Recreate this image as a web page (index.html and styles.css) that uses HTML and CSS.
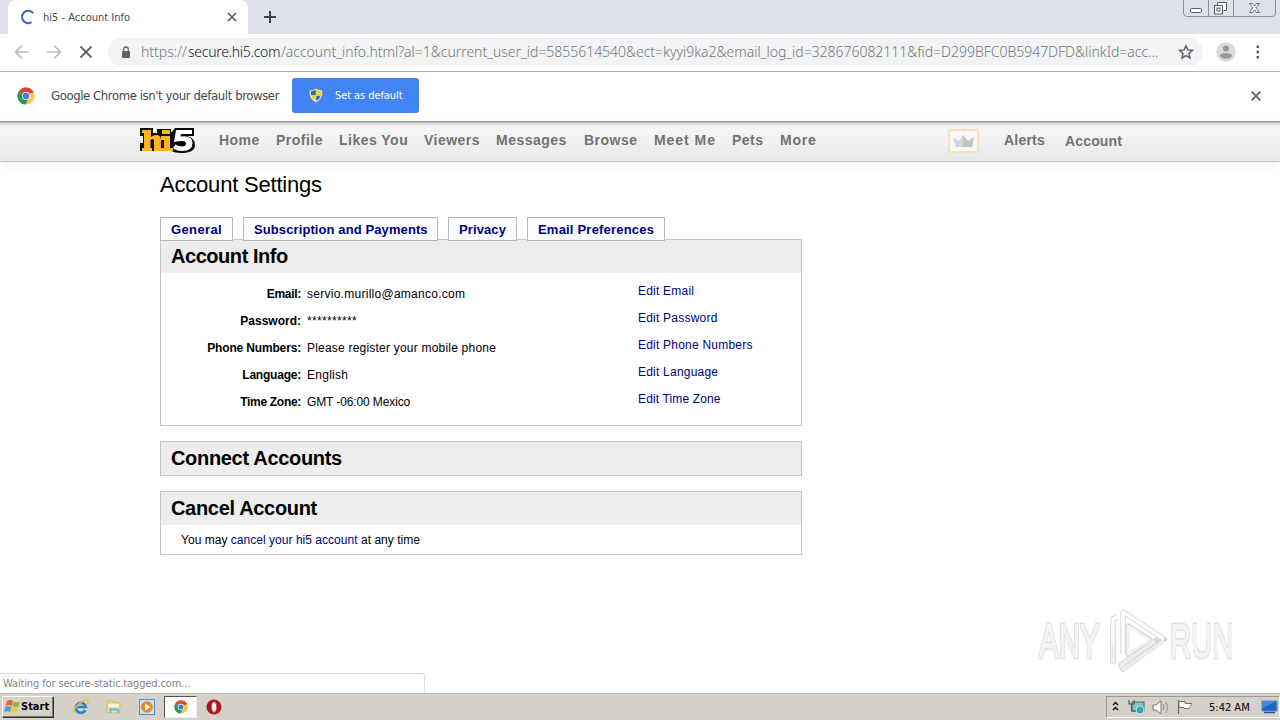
FILE: index.html
```
<!DOCTYPE html>
<html lang="en">
<head>
<meta charset="utf-8">
<title>hi5 - Account Info</title>
<link rel="stylesheet" href="styles.css">
</head>
<body>
<svg width="0" height="0" class="defs">
  <defs>
    <symbol id="chrome" viewBox="0 0 18 18">
      <circle cx="9" cy="9" r="8.500" fill="#fbc93d"/>
      <path d="M9 9 L1.600 4.800 A8.500 8.500 0 0 1 16.400 4.800 Z" fill="#df4537"/>
      <path d="M9 9 L1.600 4.800 A8.500 8.500 0 0 0 8.300 17.500 L11.500 12 Z" fill="#259b57"/>
      <path d="M9 5h7.500" stroke="#df4537" stroke-width="1"/>
      <circle cx="9" cy="9" r="4.100" fill="#fff"/>
      <circle cx="9" cy="9" r="3.300" fill="#3e7de8"/>
    </symbol>
  </defs>
</svg>
<div class="screen">
  <header class="tabstrip">
    <div class="tab">
      <svg class="spinner" width="16" height="16" viewBox="0 0 16 16"><path d="M13.200 4.200A6.200 6.200 0 1 0 11.500 13.200" fill="none" stroke="#3467d6" stroke-width="2"/></svg>
      <span class="tab-title">hi5 - Account Info</span>
      <svg class="tab-close" width="10" height="10" viewBox="0 0 10 10"><path d="M1 1l8 8M9 1l-8 8" stroke="#55585c" stroke-width="1.600"/></svg>
    </div>
    <svg class="new-tab" width="12" height="12" viewBox="0 0 12 12"><path d="M6 0v12M0 6h12" stroke="#3c4043" stroke-width="2"/></svg>
    <svg class="winbtns" width="94" height="18" viewBox="0 0 94 18">
      <path d="M.5 0v13q0 3.500 3.500 3.500h85q3.500 0 3.500-3.500V0M25.500 0v16M50.500 0v16" fill="none" stroke="#8b8f98"/>
      <rect x="7.500" y="8.500" width="11" height="4" rx="1" fill="#fff" stroke="#555a64"/>
      <path d="M34.500 5.500v-3h9v8h-3" fill="#fff" stroke="#555a64"/><rect x="31.500" y="5.500" width="8" height="8.500" fill="#fff" stroke="#555a64"/><rect x="34" y="8" width="3" height="3" fill="none" stroke="#555a64"/>
      <path d="M66.500 3.500h3l2 2.500 2-2.500h3l-3.300 4.300 3.300 4.700h-3l-2-2.700-2 2.700h-3l3.300-4.700z" fill="#fff" stroke="#6a6e77"/>
    </svg>
  </header>
  <div class="toolbar">
    <svg width="100" height="33" viewBox="0 0 100 33" fill="none">
      <path d="M29 18H16M22 11.500L15.500 18l6.500 6.500M47 18h13M54 11.500l6.500 6.500-6.500 6.500" stroke="#b8babd" stroke-width="1.600"/>
      <path d="M80.500 12.500l11 11M91.500 12.500l-11 11" stroke="#5f6368" stroke-width="1.800"/>
    </svg>
    <div class="omnibox">
      <svg class="lock" width="10" height="13" viewBox="0 0 10 13"><rect x="1" y="5" width="8" height="7" rx="1" fill="#5f6368"/><path d="M2.700 5.500V3.300a2.300 2.300 0 0 1 4.600 0v2.200" fill="none" stroke="#5f6368" stroke-width="1.300"/></svg>
      <span class="url"><span class="u1">https://</span><span class="u2">secure.hi5.com</span><span class="u3">/account_info.html?al=1&amp;current_user_id=5855614540&amp;ect=kyyi9ka2&amp;email_log_id=328676082111&amp;fid=D299BFC0B5947DFD&amp;linkId=acc...</span></span>
      <svg class="star" width="16" height="16" viewBox="0 0 16 16"><path d="M8 1.700l1.900 4.200 4.500.5-3.400 3.100 1 4.500L8 11.700 4 14l1-4.500L1.600 6.400l4.500-.5z" fill="none" stroke="#5f6368" stroke-width="1.500"/></svg>
    </div>
    <svg class="avatar" width="20" height="20" viewBox="0 0 20 20"><circle cx="10" cy="10" r="9.800" fill="#dadbde"/><circle cx="10" cy="6.500" r="3" fill="#96989b"/><ellipse cx="10" cy="13.800" rx="6" ry="2.900" fill="#96989b"/></svg>
    <svg class="dots" width="4" height="14" viewBox="0 0 4 14"><path d="M.5.500h2.600v2.600H.5zM.5 5.700h2.600v2.600H.5zM.5 10.900h2.600v2.600H.5z" fill="#5f6368"/></svg>
  </div>
  <div class="infobar">
    <svg class="chrome-logo" width="18" height="18"><use href="#chrome"/></svg>
    <span class="info-text">Google Chrome isn't your default browser</span>
    <div class="default-btn">
      <svg width="14" height="15" viewBox="0 0 14 15"><path d="M7 .5Q10 2.300 13.300 2.200V7Q12.500 12 7 14.500 1.500 12 .7 7V2.200Q4 2.300 7 .5z" fill="#e8edf2" stroke="#7c8a80" stroke-width=".6"/><path d="M6.800 2L2 3.200V7.300h4.800z" fill="#2f6fae"/><path d="M7.200 2L12 3.200V7.300H7.200zM6.800 7.700H2.200Q3 11 6.800 13z" fill="#f3d01c"/><path d="M7.200 7.700h4.600Q11 11 7.200 13z" fill="#2f6fae"/></svg>
      <span class="btn-label">Set as default</span>
    </div>
    <svg class="info-close" width="10" height="10" viewBox="0 0 10 10"><path d="M.7.700l8.600 8.600M9.300.700L.7 9.300" stroke="#5f6368" stroke-width="1.900"/></svg>
  </div>
  <main class="page">
    <nav class="site-nav">
      <svg class="logo" width="56" height="28" viewBox="0 0 56 28">
        <path d="M0 2h13v5h4V3h14v3h1l3-4h19v8h-7q8 2 8 9 0 8-14 8-6 0-10-2H0v-8h3V10H0z" fill="#0b0906"/>
        <path d="M2 4h9v7q2-2 5-2 5 0 5 5v8h2v3h-9V15q0-2-2-2-1.500 0-1.500 2v7H12v3H2v-3h2V7H2zM22 4h8v4h-8zM21 10h9v12h3v3H22v-3h2v-8h-3z" fill="#fbb51c"/>
        <path d="M36 4h16v4H41l-.5 2.500q12-1.500 12 6.500 0 8-10.500 8-6 0-9-3l2.500-3.500q3 2 6.500 2 4 0 4-3 0-4-12-1.500z" fill="#fff"/>
      </svg>
      <span class="n n1">Home</span><span class="n n2">Profile</span><span class="n n3">Likes You</span><span class="n n4">Viewers</span><span class="n n5">Messages</span><span class="n n6">Browse</span><span class="n n7">Meet Me</span><span class="n n8">Pets</span><span class="n n9">More</span>
      <span class="crown"><svg width="22" height="14" viewBox="0 0 22 14"><path d="M0 4l6 3 4-6 5 6 6-4-2 10H3z" fill="#d5d6d9"/><path d="M10 1l5 6 6-4-2 10H10z" fill="#c3c4c8"/></svg></span>
      <span class="n n10">Alerts</span><span class="n n11">Account</span>
    </nav>
    <div class="content">
      <h1>Account Settings</h1>
      <div class="tabs">
        <a class="t1">General</a><a class="t2">Subscription and Payments</a><a class="t3">Privacy</a><a class="t4">Email Preferences</a>
      </div>
      <section class="box info">
        <h2 class="h-a">Account Info</h2>
        <div class="rows">
          <div class="row"><b class="l1">Email:</b><span class="v1">servio.murillo@amanco.com</span><a>Edit Email</a></div>
          <div class="row"><b class="l2">Password:</b><span class="v2">**********</span><a>Edit Password</a></div>
          <div class="row"><b class="l3">Phone Numbers:</b><span class="v3">Please register your mobile phone</span><a>Edit Phone Numbers</a></div>
          <div class="row"><b class="l4">Language:</b><span class="v4">English</span><a>Edit Language</a></div>
          <div class="row"><b class="l5">Time Zone:</b><span class="v5">GMT -06:00 Mexico</span><a class="e5">Edit Time Zone</a></div>
        </div>
      </section>
      <section class="box"><h2>Connect Accounts</h2></section>
      <section class="box"><h2>Cancel Account</h2><p>You may <a>cancel your hi5 account</a> at any time</p></section>
    </div>
    <div class="status">Waiting for secure-static.tagged.com...</div>
    <div class="watermark">
      <span class="wm wm1">ANY</span>
      <svg width="62" height="66" viewBox="0 0 62 66" fill="none" stroke-linejoin="round">
        <g stroke="#d6d6d6" stroke-width="5.500"><path d="M11 9l-4 2v45"/><path d="M17 46V4L58 31 17 61l-2-4 37-26"/><path d="M22 46V18l22 14z"/></g>
        <path d="M11 9l-4 2v45M17 46V4l41 27" stroke="#fff" stroke-width="3.500"/>
        <path d="M58 33L17 61l-2-4 34-24M7 36v20" stroke="#ededed" stroke-width="3.500"/>
        <path d="M22 46V18l22 14z" fill="#fff" stroke="#f2f2f2" stroke-width="3"/>
      </svg>
      <span class="wm wm2">RUN</span>
    </div>
  </main>
  <footer class="taskbar">
    <div class="start"><svg width="17" height="15" viewBox="0 0 17 15"><path d="M3 2q3-2 6 0L8 7Q5 5 1.500 7z" fill="#e9652e"/><path d="M10 2.500q3 1.500 6 0L14.500 7.500q-3 1.500-6 0z" fill="#8bbd45"/><path d="M1.300 8q3-1.500 6 0l-1 5q-3-1.500-6 0z" fill="#4c9bd7"/><path d="M8.300 8.500q3 1.500 6 0l-1 4.500q-3 1.500-6 0z" fill="#f7c52d"/></svg><b>Start</b></div>
    <div class="task ie"><svg width="16" height="16" viewBox="0 0 18 18"><path d="M14 12.500A5.700 5.700 0 1 1 14.500 9H4" fill="none" stroke="#2586d0" stroke-width="3"/><path d="M2 16Q-1 12 7 5.500T17 2.500q.5 1-1 3" fill="none" stroke="#e8bd35" stroke-width="1.500"/></svg></div>
    <div class="task"><svg width="16" height="16" viewBox="0 0 16 16"><path d="M1 3l5-2 1 2 7 1v10H1z" fill="#f3d774" stroke="#d0a73c" stroke-width=".6"/><path d="M2 5h11v3H2z" fill="#fff7cb"/><path d="M3 15V9h11v6h-3v-3H6v3z" fill="#6ab9e7" stroke="#eef8fd" stroke-width=".5"/></svg></div>
    <div class="task"><svg width="16" height="16" viewBox="0 0 16 16"><rect x=".5" y=".5" width="15" height="15" fill="#bfe2f7" stroke="#4798d2"/><circle cx="8" cy="8" r="5.800" fill="#ee871b"/><path d="M6 4.500L11.500 8 6 11.500z" fill="#fff"/></svg></div>
    <div class="task active"><svg width="14" height="14"><use href="#chrome"/></svg></div>
    <div class="task opera"><svg width="16" height="16" viewBox="0 0 16 16"><circle cx="8" cy="8" r="7.500" fill="#a91822"/><ellipse cx="8" cy="8" rx="2.500" ry="5.300" fill="#fff" stroke="#d95155"/></svg></div>
    <div class="tray">
      <svg width="92" height="20" viewBox="0 0 92 20" fill="none">
        <path d="M6 8l2.500-2.500L11 8M6 13l2.500-2.500L11 13" stroke="#111" stroke-width="1.500"/>
        <rect x="25" y="5" width="12" height="9" fill="#84bfc4" stroke="#456f75"/><path d="M22 3v4h5V3M24.500 7v7h6" stroke="#555" stroke-width="1.200"/><circle cx="33" cy="13" r="4" fill="#35a7ab" stroke="#e4ffff" stroke-width=".7"/>
        <path d="M46 8h3l5-4v13l-5-4h-3z" fill="#fff" stroke="#777"/><path d="M56 7q2 3 0 6M58.500 5q4 5.500 0 11" stroke="#888"/>
        <path d="M71.500 3v14" stroke="#666" stroke-width="1.200"/><path d="M72 4.500h6v2h7l-3 5h-5v-1h-5z" fill="#fff" stroke="#777"/>
      </svg>
      <span class="clock">5:42 AM</span>
      <svg width="17" height="14" viewBox="0 0 17 14"><rect x="1" y="1" width="15" height="10" fill="#2362c5" stroke="#5c8cce"/><path d="M1 1h14L2 8z" fill="#478be0"/><path d="M3 12.500h11" stroke="#28518e" stroke-width="1.500"/></svg>
    </div>
  </footer>
</div>
</body>
</html>
```
FILE: styles.css
```
* { box-sizing: border-box; }
body { margin: 0; overflow: hidden; background: #fff; font-family: "Liberation Sans", Arial, sans-serif; color: #000; }
.defs { position: absolute; }
svg { display: block; flex: none; }
.screen { width: 1280px; height: 720px; display: flex; flex-direction: column; overflow: hidden; white-space: nowrap; }
.tabstrip { height: 34px; flex: none; display: flex; background: #dee1e8; padding-left: 8px; }
.tab { width: 240px; height: 34px; background: #fff; border-radius: 8px 8px 0 0; display: flex; align-items: center; padding-left: 12px; }
.tab-title, .info-text, .btn-label, .status, .clock, .start { font-family: "DejaVu Sans Condensed", "DejaVu Sans", sans-serif; }
.tab-title { width: 191px; padding-left: 7px; font-size: 11px; color: #45494d; }
.new-tab { margin: 11px 0 0 16px; }
.winbtns { margin-left: auto; margin-right: 3px; }
.toolbar { height: 38px; flex: none; display: flex; align-items: flex-start; border-bottom: 1px solid #b0b0b3; }
.omnibox { width: 1095px; height: 28px; margin: 4px 0 0 8px; border-radius: 14px; background: #f1f3f5; display: flex; align-items: center; padding-left: 13px; }
.url { width: 1047px; padding-left: 10px; font-family: "Noto Sans", sans-serif; font-size: 14px; font-weight: 300; color: #74787c; display: flex; position: relative; top: -1px; }
.u1 { width: 47px; }
.u2 { width: 93px; color: #202124; letter-spacing: -.27px; }
.u3 { letter-spacing: -.03px; }
.avatar { margin: 8px 0 0 13px; }
.dots { margin: 11px 0 0 20px; }
.infobar { height: 49px; flex: none; display: flex; align-items: center; padding: 0 0 2px 17px; }
.info-text { width: 241px; margin-left: 16px; font-size: 13px; letter-spacing: -.41px; color: #44474a; }
.default-btn { width: 127px; height: 35px; border-radius: 3px; background: #4284f4; display: flex; align-items: center; padding-left: 17px; color: #fff; }
.btn-label { margin-left: 12px; font-size: 11px; letter-spacing: -.08px; }
.info-close { margin-left: auto; margin-right: 19px; }
.page { height: 572px; flex: none; position: relative; }
.site-nav { height: 41px; display: flex; padding-left: 140px; background: linear-gradient(#888 0, #aaa 1px, #d4d4d4 2px, #f0f0f0 5px, #f5f5f5 9px, #e9e9e9 100%); border-bottom: 1px solid #ccc; box-shadow: 0 3px 8px #eee; }
.logo { margin: 5px 23px 0 0; }
.n { padding-top: 11px; line-height: 17px; font-weight: bold; font-size: 14px; color: #727272; letter-spacing: .48px; }
.n1 { width: 57px; }
.n2 { width: 63px; }
.n3 { width: 85px; }
.n4 { width: 72px; }
.n5 { width: 88px; }
.n6 { width: 70px; }
.n7 { width: 78px; letter-spacing: .95px; }
.n8 { width: 48px; }
.n9 { width: 168px; letter-spacing: .8px; }
.n10 { width: 61px; letter-spacing: .2px; }
.n11 { padding-top: 12px; letter-spacing: .15px; }
.crown { width: 31px; height: 24px; margin: 8px 25px 0 0; border: 2px solid #f3e4bd; border-radius: 3px; background: #f7f7f6; display: grid; place-items: center; }
.content { width: 642px; margin-left: 160px; }
h1 { margin: 0; height: 55px; padding-top: 10px; font-size: 22px; line-height: 26px; font-weight: normal; letter-spacing: -.2px; }
.tabs { display: flex; gap: 10px; height: 24px; position: relative; z-index: 1; }
.tabs a { height: 24px; border: 1px solid #b2b8c2; background: #fbfdff; padding-left: 10px; line-height: 23px; font-size: 13px; font-weight: bold; color: #000080; letter-spacing: .1px; }
.tabs .t1 { width: 73px; letter-spacing: .38px; }
.t2 { width: 195px; }
.t3 { width: 69px; }
.tabs .t4 { width: 138px; letter-spacing: .2px; }
.box { border: 1px solid #c6c6c8; margin-bottom: 15px; background: #fff; }
.info { height: 187px; margin-top: -2px; }
h2 { margin: 0; height: 33px; background: #ededed; padding-left: 10px; font-size: 20px; line-height: 33px; letter-spacing: -.32px; }
.h-a { letter-spacing: -.45px; }
.rows { padding-top: 8px; font-size: 12px; }
.row { height: 27px; display: flex; line-height: 27px; }
.row b { width: 140px; text-align: right; margin-right: 6px; }
.l1, .l5 { letter-spacing: -.3px; }
.l3 { letter-spacing: -.16px; }
.l4 { letter-spacing: -.22px; }
.row span { width: 331px; }
.v1, .v4 { letter-spacing: .27px; }
.v2 { letter-spacing: .33px; }
.v3 { letter-spacing: .21px; }
.v5 { letter-spacing: -.12px; }
.row a { line-height: 21px; letter-spacing: .22px; }
.row .e5 { letter-spacing: .14px; }
a { color: #000080; }
.box p { margin: 0; height: 29px; padding: 1px 0 0 20px; font-size: 12px; line-height: 29px; letter-spacing: .03px; }
.status { position: absolute; left: 0; bottom: 0; width: 425px; height: 20px; border: 1px solid #ddd; border-left: 0; border-bottom: 0; border-top-right-radius: 3px; background: #fff; padding-left: 3px; line-height: 19px; font-size: 11px; letter-spacing: -.13px; color: #858585; }
.watermark { position: absolute; left: 1039px; top: 487px; width: 200px; height: 66px; display: flex; align-items: center; }
.wm { font-family: "Liberation Sans", sans-serif; font-size: 46px; line-height: 66px; width: 104px; transform: scaleX(.64); transform-origin: left; margin-right: -37px; color: #f3f3f3; -webkit-text-stroke: 2px #f3f3f3; filter: drop-shadow(0 0 1px #bcbcbc) drop-shadow(0 0 1px #ddd); }
.wm2 { margin-left: 2px; }
.taskbar { height: 27px; flex: none; background: #d5d0c8; border-top: 1px solid #c4c0b9; display: flex; padding: 2px 0 0 2px; }
.start { width: 51px; height: 21px; border: 1px solid; border-color: #fff #777 #777 #fff; box-shadow: 1px 1px #333; display: flex; align-items: center; padding-left: 1px; font-size: 11px; }
.task { width: 33px; height: 22px; display: grid; place-items: center; }
.ie { margin-left: 11px; }
.active { background: #fff; border: 1px solid; border-color: #555 #eee #eee #555; margin-left: 1px; }
.tray { margin-left: auto; width: 174px; height: 22px; border: 1px solid; border-color: #999 #fff #fff #999; display: flex; align-items: center; }
.clock { width: 62px; padding-left: 10px; font-size: 11px; }
```
